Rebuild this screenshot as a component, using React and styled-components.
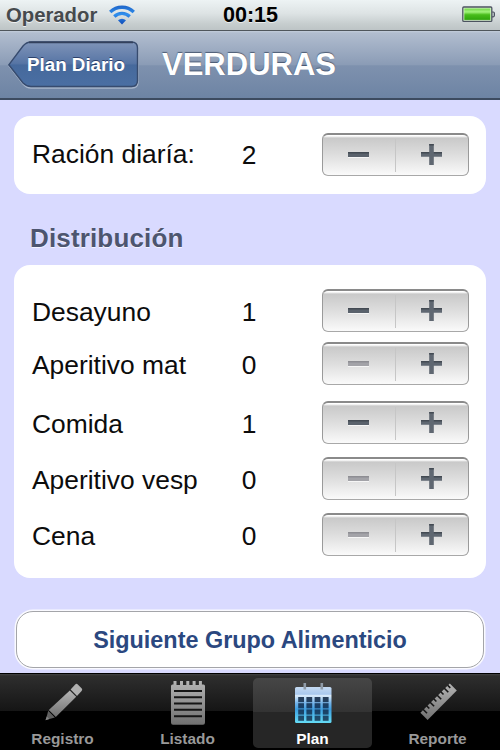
import React from 'react';
import styled, { createGlobalStyle } from 'styled-components';

const GlobalStyle = createGlobalStyle`
  * {
    box-sizing: border-box;
  }
  body {
    margin: 0;
    background: #d9daff;
    font-family: "Liberation Sans", Arial, Helvetica, sans-serif;
  }
  button {
    font-family: inherit;
    padding: 0;
    margin: 0;
  }
`;

const Screen = styled.div`
  width: 500px;
  height: 750px;
  display: flex;
  flex-direction: column;
  overflow: hidden;
  background: #d9daff;
`;

const StatusBar = styled.header`
  height: 31px;
  flex: none;
  display: grid;
  grid-template-columns: 1fr auto 1fr;
  align-items: center;
  padding: 0 5px 0 6px;
  background: linear-gradient(#edf3f4 0%, #dde3e4 45%, #c6cdce 80%, #bdc4c6 100%);
  border-bottom: 1px solid #4f565c;
`;

const Carrier = styled.div`
  display: flex;
  align-items: center;
  gap: 11px;
  font-size: 20.3px;
  font-weight: bold;
  color: #464a4d;
  text-shadow: 0 1px 0 rgba(255, 255, 255, 0.7);
`;

const Clock = styled.div`
  font-size: 21.6px;
  font-weight: bold;
  color: #000;
  text-shadow: 0 1px 0 rgba(255, 255, 255, 0.6);
`;

const Battery = styled.div`
  display: flex;
  justify-content: flex-end;
  padding-bottom: 2px;
`;

const NavBar = styled.nav`
  height: 69px;
  flex: none;
  display: flex;
  align-items: center;
  padding: 1px 8px 0;
  background: linear-gradient(#c3cddb 0, #b1bdcf 2px, #8b9cb6 50%, #7e91ae 52%, #6d84a4 100%);
  border-bottom: 2px solid #3c4b60;
`;

const BackButton = styled.button`
  display: grid;
  width: 131px;
  height: 48px;
  border: 0;
  background: none;
  > * {
    grid-area: 1 / 1;
  }
`;

const BackLabel = styled.span`
  align-self: center;
  padding-left: 5px;
  z-index: 1;
  font-size: 18.8px;
  font-weight: bold;
  color: #fff;
  white-space: nowrap;
  text-shadow: 0 -1px 0 rgba(20, 40, 80, 0.7);
`;

const Title = styled.h1`
  margin: 0 0 0 23px;
  font-size: 31px;
  font-weight: bold;
  color: #fff;
  text-shadow: 0 -1.5px 1px rgba(35, 50, 75, 0.65);
`;

const Content = styled.main`
  flex: 1;
  padding: 16px 14px 0;
`;

const Card = styled.section`
  background: #fff;
  border-radius: 16px;
  height: ${(props) => props.$height}px;
  padding: ${(props) => props.$top}px 17px 0 18px;
`;

const SectionTitle = styled.h2`
  margin: 0;
  height: 71px;
  padding: 29px 0 0 16px;
  font-size: 26px;
  line-height: 30px;
  letter-spacing: 0.15px;
  color: #4d556f;
  text-shadow: 0 1px 0 rgba(255, 255, 255, 0.7);
`;

const Row = styled.div`
  display: grid;
  grid-template-columns: 197px 40px 1fr;
  align-items: center;
  height: 43px;
  margin-top: ${(props) => props.$gap || 0}px;
`;

const Label = styled.span`
  font-size: 26.4px;
  line-height: 31px;
  color: #0c0c0c;
  white-space: nowrap;
  padding-top: ${(props) => props.$drop || 0}px;
`;

const Amount = styled(Label)`
  text-align: center;
`;

const StepperBox = styled.div`
  display: flex;
  align-items: center;
  justify-self: end;
  width: 147px;
  height: 43px;
  border: 1px solid #9a9a9a;
  border-top: 2px solid #8a8a8a;
  border-bottom-color: #a8a8a8;
  border-radius: 6px;
  background: linear-gradient(#fff 0, #fff 1px, #c9c9c9 3px, #dedede 50%, #fafafa 100%);
`;

const StepButton = styled.button`
  flex: 1;
  height: 33px;
  display: flex;
  align-items: center;
  justify-content: center;
  padding: 0 1px 2px 0;
  border: 0;
  background: none;
  & + & {
    border-left: 1px solid #c6c6c6;
  }
`;

const NextButton = styled.button`
  display: block;
  width: 468px;
  height: 57px;
  margin: 33px 0 0 2px;
  padding-top: 2px;
  border: 1.5px solid #a4a5a9;
  border-radius: 17px;
  background: #fff;
  box-shadow: 0 0 0 1.5px rgba(255, 255, 255, 0.85);
  font-size: 23.4px;
  font-weight: bold;
  color: #2b4880;
`;

const TabBar = styled.footer`
  height: 77px;
  flex: none;
  display: grid;
  grid-template-columns: repeat(4, 119px);
  column-gap: 6px;
  padding: 5px 3px 3px;
  background: linear-gradient(#000 0, #000 1px, #434343 1px, #2e2e2e 3px, #151515 38px, #000 38px);
`;

const Tab = styled.button`
  display: flex;
  flex-direction: column;
  align-items: center;
  border: 0;
  border-radius: 5px;
  background: ${(props) => (props.$active ? 'linear-gradient(#464646, #333 34px, #262626 34px, #262626)' : 'none')};
  color: ${(props) => (props.$active ? '#fff' : '#999')};
  font-size: 15.4px;
  font-weight: bold;
  line-height: 18px;
  svg {
    display: block;
    margin-bottom: 2px;
  }
`;

function WifiIcon() {
  return (
    <svg width="28" height="21" viewBox="0 0 28 21" fill="none">
      <defs>
        <linearGradient id="wifi" x1="0" y1="0" x2="0" y2="21" gradientUnits="userSpaceOnUse">
          <stop offset="0" stopColor="#1d62c6" />
          <stop offset="0.45" stopColor="#2f8fee" />
          <stop offset="1" stopColor="#0b3fae" />
        </linearGradient>
      </defs>
      <g stroke="url(#wifi)" strokeWidth="3.3">
        <path d="M2.2 7 A17 17 0 0 1 25.8 7" />
        <path d="M6.3 11.5 A11 11 0 0 1 21.7 11.5" />
      </g>
      <path d="M10 15.3 A6 6 0 0 1 18 15.3 L14 19.5 Z" fill="url(#wifi)" />
    </svg>
  );
}

function BatteryIcon() {
  return (
    <svg width="33" height="17" viewBox="0 0 33 17">
      <defs>
        <linearGradient id="charge" x1="0" y1="0" x2="0" y2="1">
          <stop offset="0" stopColor="#74d94a" />
          <stop offset="0.3" stopColor="#a2f47c" />
          <stop offset="0.55" stopColor="#48bd1b" />
          <stop offset="1" stopColor="#2fa50c" />
        </linearGradient>
      </defs>
      <path d="M30 6 h1.2 q1.2 0 1.2 1.2 v2.4 q0 1.2 -1.2 1.2 h-1.2" fill="#c5ccd0" stroke="#4c5360" strokeWidth="1.2" />
      <rect x="0.8" y="1" width="29" height="14.4" rx="1" fill="#d8f5cb" stroke="#4c5360" strokeWidth="1.3" />
      <rect x="2.3" y="2.5" width="26" height="11.4" fill="url(#charge)" />
    </svg>
  );
}

function BackShape() {
  return (
    <svg width="131" height="48" viewBox="0 0 131 48">
      <defs>
        <linearGradient id="back" x1="0" y1="0" x2="0" y2="1">
          <stop offset="0" stopColor="#7f94b8" />
          <stop offset="0.48" stopColor="#5775a5" />
          <stop offset="0.52" stopColor="#46699c" />
          <stop offset="1" stopColor="#4a6fa3" />
        </linearGradient>
      </defs>
      <path d="M1 25 L15 6 Q18.5 2.3 23 2.3 H124 Q130 2.3 130 8.3 V41 Q130 47 124 47 H23 Q18.5 47 15 43 Z" fill="none" stroke="#a9b7cc" strokeWidth="1.3" />
      <path d="M0.8 23.8 L15 5 Q18.5 1 23 1 H123.5 Q129.5 1 129.5 7 V39.5 Q129.5 45.5 123.5 45.5 H23 Q18.5 45.5 15 42 Z" fill="url(#back)" stroke="#374b6e" strokeWidth="1.4" />
      <path d="M21 1.4 H125" stroke="#33415c" strokeWidth="1.6" />
    </svg>
  );
}

function MinusIcon({ off }) {
  return (
    <svg width="21" height="21" viewBox="0 0 21 21">
      <rect y="8" width="21" height="5" fill={off ? '#a3a3a8' : '#5a626c'} />
      <rect y="8" width="21" height="1.5" fill={off ? '#8e8e93' : '#434a53'} />
      <rect y="13" width="21" height="1" fill="#fff" opacity="0.7" />
    </svg>
  );
}

function PlusIcon() {
  return (
    <svg width="21" height="21" viewBox="0 0 21 21">
      <path d="M8.2 0 H12.8 V8 H21 V12.8 H12.8 V21 H8.2 V12.8 H0 V8 H8.2 Z" fill="#5f6771" />
      <path d="M8.2 0 h4.6 v1.4 h-4.6 z M0 8 h8.2 v1.5 h-8.2 z M12.8 8 h8.2 v1.5 h-8.2 z" fill="#434a53" />
    </svg>
  );
}

function GrayGradient({ id }) {
  return (
    <defs>
      <linearGradient id={id} x1="0" y1="0" x2="0" y2="1">
        <stop offset="0" stopColor="#b4b4b4" />
        <stop offset="1" stopColor="#707070" />
      </linearGradient>
    </defs>
  );
}

function PencilIcon() {
  return (
    <svg width="50" height="50" viewBox="0 0 50 50">
      <GrayGradient id="pencil" />
      <path d="M32.6 11.5 L37.2 6.5 Q38.5 5.3 39.8 6.4 L43.8 10.4 Q44.8 11.7 43.6 12.9 L39 17.9 Z" fill="#b0b0b0" />
      <path d="M31.8 12.4 L38.2 18.8 L17.8 38.9 L10.8 32 Z" fill="url(#pencil)" />
      <path d="M10.2 32.8 L16.9 39.4 L7.8 42 Z" fill="#606060" />
      <path d="M8.8 38.6 L11.3 41 L7.4 42.3 Z" fill="#858585" />
    </svg>
  );
}

function NotepadIcon() {
  return (
    <svg width="50" height="50" viewBox="0 0 50 50">
      <GrayGradient id="pad" />
      <path d="M8 8 Q8 6.5 9.5 6.5 H10.5 V3 H13.5 V7 H17 V3 H20 V7 H23.3 V3 H26.3 V7 H29.6 V3 H32.6 V7 H35.9 V3 H38.9 V6.5 H40.5 Q42 6.5 42 8 V44.5 Q42 46.8 40 46.8 H10 Q8 46.8 8 44.5 Z" fill="url(#pad)" />
      <path d="M11 12.9 H39 M11 19.2 H39 M11 25.5 H39 M11 31.8 H39 M11 38.3 H39" stroke="#151515" strokeWidth="2" />
    </svg>
  );
}

function CalendarIcon() {
  const cols = [10.2, 18.4, 26.6, 34.8];
  const rows = [19, 25.2, 31.4, 37.6];
  return (
    <svg width="50" height="50" viewBox="0 0 50 50">
      <defs>
        <linearGradient id="cal" x1="0" y1="0" x2="0" y2="1">
          <stop offset="0" stopColor="#c5daf2" />
          <stop offset="0.2" stopColor="#a9c8ed" />
          <stop offset="0.24" stopColor="#dcecfb" />
          <stop offset="0.45" stopColor="#72b2e8" />
          <stop offset="0.62" stopColor="#3d9ee0" />
          <stop offset="1" stopColor="#65dcf5" />
        </linearGradient>
        <linearGradient id="day" x1="0" y1="0" x2="0" y2="50" gradientUnits="userSpaceOnUse">
          <stop offset="0.35" stopColor="#2c3f58" />
          <stop offset="0.6" stopColor="#163f68" />
          <stop offset="1" stopColor="#28566c" />
        </linearGradient>
      </defs>
      <rect x="7" y="9" width="36.5" height="36" rx="1.5" fill="url(#cal)" />
      {rows.map((y) => cols.map((x) => (
        <rect key={`${x}-${y}`} x={x} y={y} width="5.8" height="5.2" fill="url(#day)" />
      )))}
      <path d="M16.8 5 V11.5 M33.8 5 V11.5" stroke="#8f9ba8" strokeWidth="2.6" />
    </svg>
  );
}

function RulerIcon() {
  return (
    <svg width="50" height="50" viewBox="0 0 50 50">
      <GrayGradient id="ruler" />
      <path d="M36.8 5.5 L43.8 12.5 L14.6 42 L7.4 34.7 Z" fill="url(#ruler)" />
      <path d="M10 31.3 l4 4 M13.6 27.8 l2.7 2.7 M17.1 24.3 l4 4 M20.7 20.8 l2.7 2.7 M24.2 17.3 l4 4 M27.8 13.8 l2.7 2.7 M31.3 10.3 l4 4 M34.6 7.2 l2.7 2.7" stroke="#161616" strokeWidth="1.6" />
    </svg>
  );
}

function Stepper({ value }) {
  return (
    <StepperBox>
      <StepButton aria-label="Menos" disabled={value === 0}>
        <MinusIcon off={value === 0} />
      </StepButton>
      <StepButton aria-label="Más">
        <PlusIcon />
      </StepButton>
    </StepperBox>
  );
}

const meals = [
  { name: 'Desayuno', value: 1, gap: 0 },
  { name: 'Aperitivo mat', value: 0, gap: 10 },
  { name: 'Comida', value: 1, gap: 16 },
  { name: 'Aperitivo vesp', value: 0, gap: 13 },
  { name: 'Cena', value: 0, gap: 13 },
];

const tabs = [
  { name: 'Registro', icon: <PencilIcon /> },
  { name: 'Listado', icon: <NotepadIcon /> },
  { name: 'Plan', icon: <CalendarIcon /> },
  { name: 'Reporte', icon: <RulerIcon /> },
];

export default function App() {
  return (
    <Screen>
      <GlobalStyle />
      <StatusBar>
        <Carrier>
          Operador
          <WifiIcon />
        </Carrier>
        <Clock>00:15</Clock>
        <Battery>
          <BatteryIcon />
        </Battery>
      </StatusBar>
      <NavBar>
        <BackButton>
          <BackShape />
          <BackLabel>Plan Diario</BackLabel>
        </BackButton>
        <Title>VERDURAS</Title>
      </NavBar>
      <Content>
        <Card $height={78} $top={17}>
          <Row>
            <Label>Ración diaría:</Label>
            <Amount $drop={2}>2</Amount>
            <Stepper value={2} />
          </Row>
        </Card>
        <SectionTitle>Distribución</SectionTitle>
        <Card $height={313} $top={24}>
          {meals.map((meal) => (
            <Row key={meal.name} $gap={meal.gap}>
              <Label $drop={4}>{meal.name}</Label>
              <Amount $drop={4}>{meal.value}</Amount>
              <Stepper value={meal.value} />
            </Row>
          ))}
        </Card>
        <NextButton>Siguiente Grupo Alimenticio</NextButton>
      </Content>
      <TabBar>
        {tabs.map((tab) => (
          <Tab key={tab.name} $active={tab.name === 'Plan'}>
            {tab.icon}
            {tab.name}
          </Tab>
        ))}
      </TabBar>
    </Screen>
  );
}
